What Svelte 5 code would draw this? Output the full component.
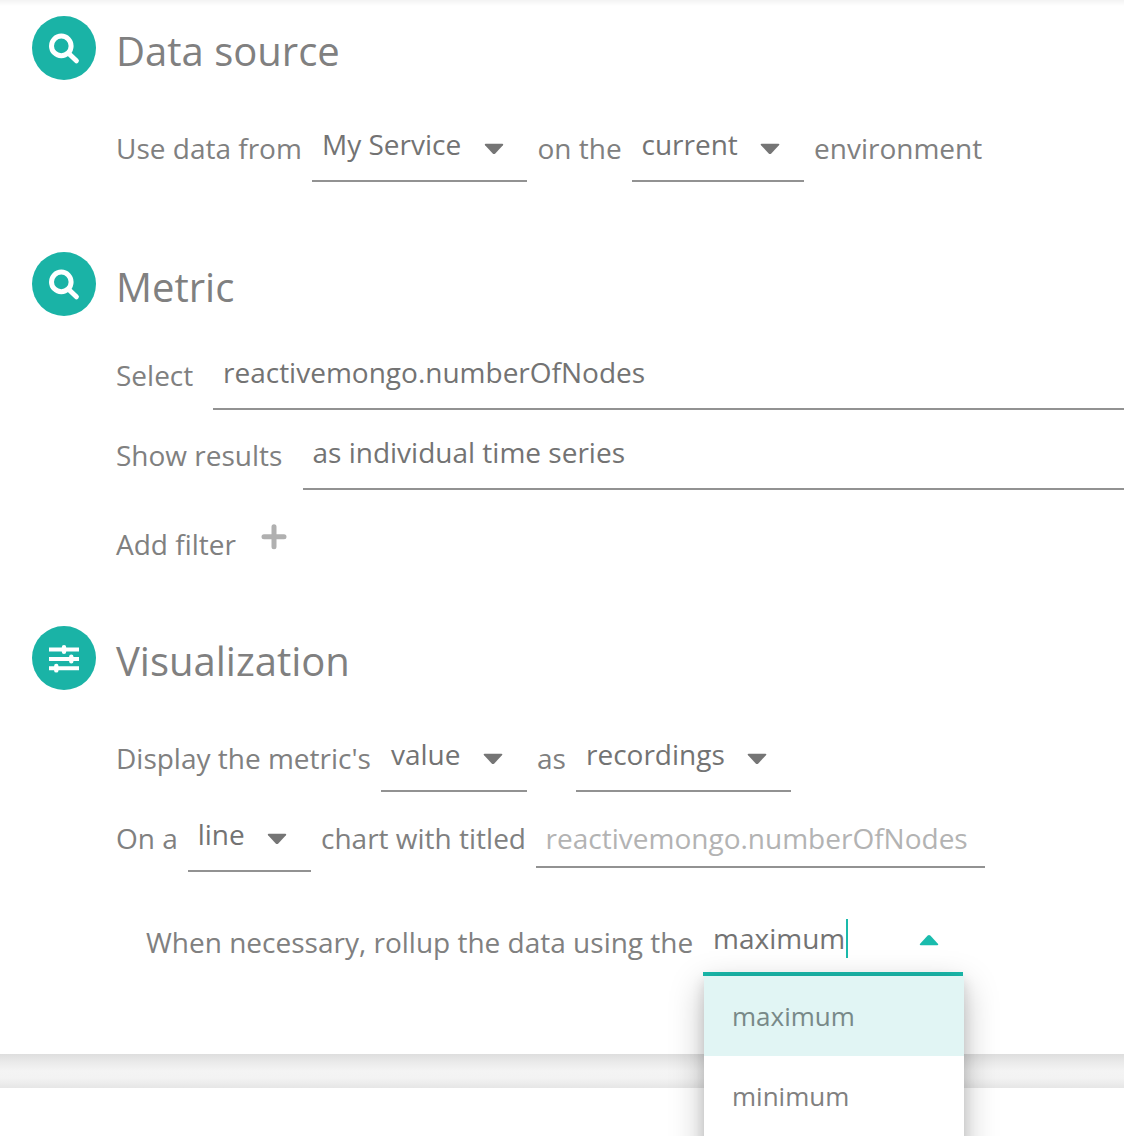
<script>
  const rollups = ['maximum', 'minimum'];
  let rollup = $state('maximum');
</script>

{#snippet searchIcon()}
  <svg class="glyph" viewBox="0 0 64 64" aria-hidden="true">
    <circle class="ring" cx="29.3" cy="29.9" r="9.8" />
    <path class="handle" d="M37 37.8l7.4 7" />
  </svg>
{/snippet}

{#snippet arrowShape()}
  <path d="M1.6.7h16.8q1.6.2.5 1.6l-7.6 8.1q-1.3 1.2-2.6 0L1.1 2.3Q0 .9 1.6.7z" />
{/snippet}

{#snippet field(text, size)}
  <button class="field {size}">
    <span>{text}</span>
    <svg class="arrow" viewBox="0 0 20 12" aria-hidden="true">{@render arrowShape()}</svg>
  </button>
{/snippet}

<main>
  <section class="panel">
    <header class="source-head">
      <div class="badge">{@render searchIcon()}</div>
      <h2>Data source</h2>
    </header>
    <div class="row source-row">
      <span class="label use">Use data from</span>
      {@render field('My Service', 'service')}
      <span class="label on-the">on the</span>
      {@render field('current', 'env')}
      <span class="label">environment</span>
    </div>

    <header class="metric-head">
      <div class="badge">{@render searchIcon()}</div>
      <h2>Metric</h2>
    </header>
    <div class="row metric-row">
      <span class="label select">Select</span>
      <div class="field wide"><span>reactivemongo.numberOfNodes</span></div>
    </div>
    <div class="row metric-row second">
      <span class="label show">Show results</span>
      <div class="field wide series"><span>as individual time series</span></div>
    </div>
    <div class="filter">
      <span>Add filter</span>
      <svg class="plus" viewBox="0 0 26 26" aria-hidden="true">
        <path d="M13 2.7v20M3 12.7h20" />
      </svg>
    </div>

    <header class="visual-head">
      <div class="badge">
        <svg class="glyph" viewBox="0 0 64 64" aria-hidden="true">
          <path class="bars" d="M17 23.4h30M17 33h30M17 42.2h30" />
          <path class="knobs" d="M32 21.3v4.4M39.3 30.8v4.4M24.3 40v4.4" />
        </svg>
      </div>
      <h2>Visualization</h2>
    </header>
    <div class="row visual-row">
      <span class="label display">Display the metric's</span>
      {@render field('value', 'value')}
      <span class="label as">as</span>
      {@render field('recordings', 'recordings')}
    </div>
    <div class="row visual-row second">
      <span class="label on-a">On a</span>
      {@render field('line', 'line')}
      <span class="label chart">chart with titled</span>
      <div class="title-input">reactivemongo.numberOfNodes</div>
    </div>
    <div class="row rollup-row">
      <span class="label rollup">When necessary, rollup the data using the</span>
      <div class="field active">
        <span>{rollup}</span><i class="caret"></i>
        <svg class="arrow up" viewBox="0 0 20 12" aria-hidden="true">{@render arrowShape()}</svg>
        <div class="menu">
          {#each rollups as option}
            <button class="option" class:selected={option === rollup} onclick={() => (rollup = option)}>{option}</button>
          {/each}
        </div>
      </div>
    </div>
  </section>
  <div class="gap"></div>
  <section class="next"></section>
</main>

<style>
  :global(body) { margin: 0; background: #fff; }
  main {
    width: 1124px;
    height: 1136px;
    overflow: hidden;
    position: relative;
    display: flex;
    flex-direction: column;
    font: 28px/38px 'Open Sans', sans-serif;
    color: #808080;
  }
  .panel {
    height: 1054px;
    box-sizing: border-box;
    padding: 16px 0 0 32px;
    background: linear-gradient(#f3f3f3, #fff 6px);
    flex: none;
  }
  header { display: flex; height: 64px; gap: 20px; }
  .metric-head { margin-top: 70px; }
  .visual-head { margin-top: 63px; }
  .badge { width: 64px; height: 64px; border-radius: 50%; background: #1ab3a6; flex: none; }
  .glyph { display: block; width: 64px; height: 64px; fill: none; stroke: #fff; }
  .ring { stroke-width: 5; }
  .handle { stroke-width: 5; stroke-linecap: round; }
  .bars { stroke-width: 4; }
  .knobs { stroke-width: 4.4; stroke-linecap: round; }
  h2 { margin: 8px 0 0; font-size: 40px; line-height: 54px; font-weight: 400; }
  .row { display: flex; height: 57px; margin-left: 84px; }
  .source-row { margin-top: 45px; }
  .metric-row { margin-top: 37px; }
  .visual-row { margin-top: 45px; }
  .row.second { margin-top: 23px; }
  .rollup-row { margin: 47px 0 0 114px; }
  .label { padding-top: 4px; white-space: nowrap; flex: none; }
  .metric-row .label { padding-top: 3px; }
  .use { width: 196px; }
  .on-the { width: 94.5px; }
  .select { width: 97px; }
  .show { width: 187px; }
  .display { width: 265px; }
  .as { width: 39px; }
  .on-a { width: 72px; }
  .chart { width: 215px; }
  .rollup { width: 557px; }
  .field {
    box-sizing: border-box;
    display: flex;
    flex: none;
    height: 57px;
    padding: 0 0 0 10px;
    border: 0;
    border-bottom: 2px solid #929292;
    background: none;
    font: inherit;
    color: #737373;
    text-align: left;
    white-space: nowrap;
  }
  .service { width: 215px; margin-right: 10.5px; }
  .env { width: 172px; margin-right: 10px; padding-left: 9.5px; }
  .env .arrow { margin-right: 24.5px; }
  .value { width: 146px; margin-right: 10px; }
  .recordings { width: 215px; }
  .recordings .arrow, .value .arrow, .line .arrow { margin-right: 24.3px; }
  .line { width: 123px; margin-right: 10px; padding-left: 9.7px; }
  .wide { flex: 1; }
  .series { padding-left: 9.5px; }
  .arrow { width: 20px; height: 12px; margin: 18px 23.5px 0 auto; fill: #757575; }
  .title-input {
    box-sizing: border-box;
    width: 449px;
    height: 53px;
    padding: 4px 0 0 9.6px;
    border-bottom: 2px solid #929292;
    color: #b3b3b3;
    white-space: nowrap;
  }
  .filter { display: flex; align-items: flex-start; height: 38px; margin: 35px 0 0 84px; }
  .filter span { width: 145px; }
  .plus { width: 26px; height: 26px; margin-top: -1px; fill: none; stroke: #b0b0b0; stroke-width: 5; stroke-linecap: round; }
  .active { position: relative; width: 260px; border-bottom: 4px solid #1abcae; }
  .caret { width: 2px; height: 39px; margin-left: 1px; background: #1abaab; }
  .up { fill: #1abcad; transform: rotate(180deg); margin-top: 15px; margin-right: 24px; }
  .menu {
    position: absolute;
    z-index: 2;
    left: 1px;
    top: 57px;
    width: 260px;
    height: 320px;
    background: #fff;
    box-shadow: 0 10px 32px rgba(0, 0, 0, .26), 0 4px 12px rgba(0, 0, 0, .12);
  }
  .option {
    display: block;
    width: 100%;
    height: 80px;
    padding: 0 28px;
    border: 0;
    background: #fff;
    color: #808080;
    font: 26px/36px 'Open Sans', sans-serif;
    text-align: left;
  }
  .selected { background: #e1f5f4; color: #788988; }
  .gap { height: 34px; flex: none; background: linear-gradient(#dedede, #ebebeb 9px, #f4f4f4 17px, #f3f3f3 24px, #e6e6e6); }
  .next { flex: 1; background: #fff; }
</style>
